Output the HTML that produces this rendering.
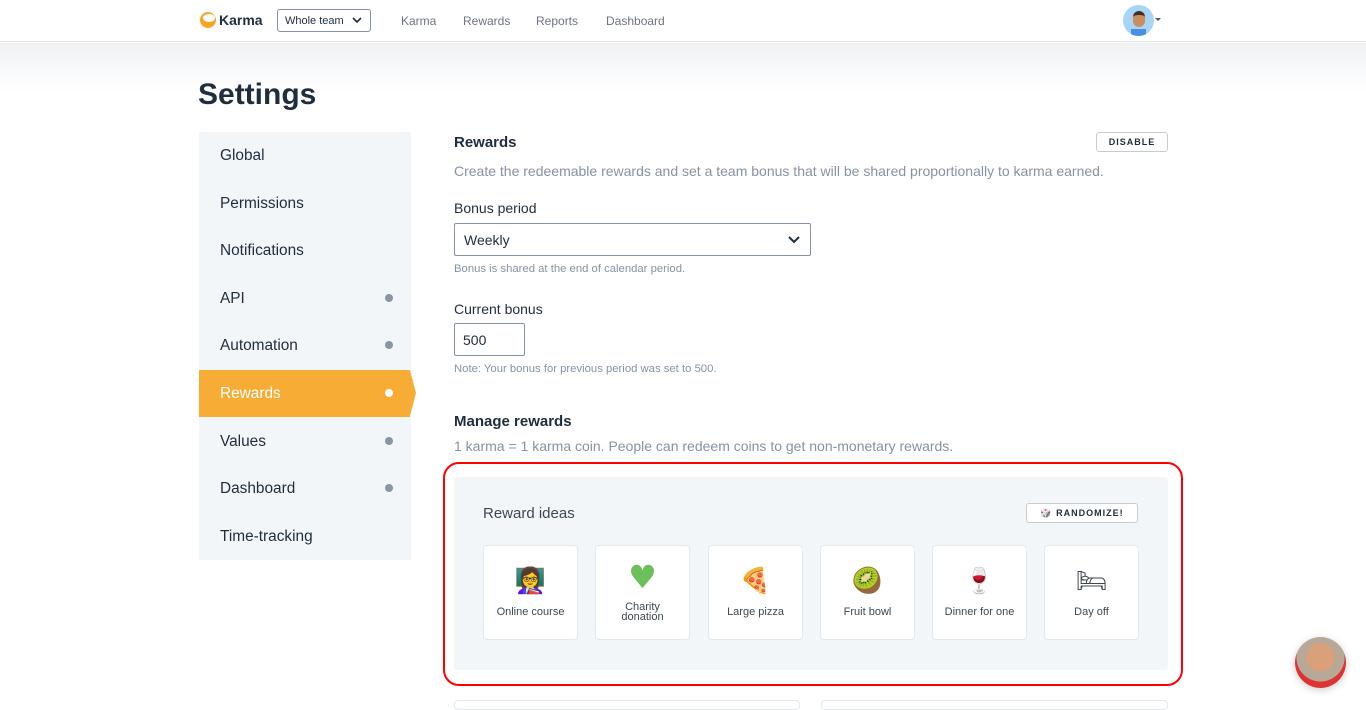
<!DOCTYPE html>
<html><head><meta charset="utf-8"><style>
*{box-sizing:border-box;margin:0;padding:0}
body{width:1366px;height:705px;overflow:hidden;background:#fff;font-family:"Liberation Sans",sans-serif;color:#1f2d3d;position:relative}
.top{position:absolute;left:0;top:0;width:1366px;height:42px;border-bottom:1px solid #e3e6ea;background:#fff}
.shade{position:absolute;left:0;top:43px;width:1366px;height:50px;background:linear-gradient(#f0f2f4,#fff)}
.abs{position:absolute}
.nav{font-size:12px;color:#6b7480;top:14px}
.side{position:absolute;left:199px;top:132px;width:212px;height:428px;background:#f3f6f9}
.si{position:absolute;left:21px;font-size:15.4px;color:#1f2d3d}
.dot{position:absolute;left:186px;width:8px;height:8px;border-radius:50%;background:#8a96a3}
.muted{color:#8593a3}
.card{position:absolute;top:545px;width:95px;height:95px;background:#fff;border:1px solid #e3e8ee;border-radius:4px;text-align:center;font-size:11px;color:#3d4852}
.card .e{position:absolute;top:20px;left:0;right:0;font-size:25px;font-family:"DejaVu Sans",sans-serif}
.card .t{position:absolute;top:61px;left:0;right:0;line-height:10px}
</style></head><body>
<div class="top"></div>
<div class="shade"></div>
<div class="abs" style="left:200px;top:12px;width:16px;height:16px;border-radius:50%;background:#f5a623;overflow:hidden"><div style="position:absolute;left:3px;top:2px;width:12px;height:8px;border-radius:50%;background:#fff"></div></div>
<div class="abs" style="left:219px;top:12px;font-size:14px;font-weight:bold;color:#1f2d3d">Karma</div>
<div class="abs" style="left:277px;top:9px;width:94px;height:23px;border:1px solid #8593a3;border-radius:3px;font-size:11px;padding:5px 7px;color:#1f2d3d">Whole team <svg style="position:absolute;right:8px;top:7px" width="10" height="7" viewBox="0 0 10 7"><path d="M1 1l4 4 4-4" fill="none" stroke="#1f2d3d" stroke-width="1.6"/></svg></div>
<div class="abs nav" style="left:401px">Karma</div>
<div class="abs nav" style="left:463px">Rewards</div>
<div class="abs nav" style="left:536px">Reports</div>
<div class="abs nav" style="left:606px">Dashboard</div>
<div class="abs" style="left:1123px;top:5px;width:31px;height:31px;border-radius:50%;background:#a8d4f5;overflow:hidden"><div style="position:absolute;left:10px;top:6px;width:12px;height:16px;border-radius:6px;background:#c98d5f;border-top:4px solid #4a2c1a"></div><div style="position:absolute;left:8px;top:24px;width:15px;height:10px;background:#4a90e2"></div></div>
<div class="abs" style="left:1155px;top:18px;border:3px solid transparent;border-top:3px solid #555"></div>
<div class="abs" style="left:198px;top:78px;font-size:30px;font-weight:bold;color:#1f2d3d">Settings</div>
<div class="side"></div>
<div class="abs" style="left:199px;top:370px;width:211px;height:47px;background:#f7ad35"></div>
<div class="abs" style="left:410px;top:370px;border-left:6px solid #f7ad35;border-top:23.5px solid transparent;border-bottom:23.5px solid transparent"></div>
<div class="si" style="left:220px;top:147px">Global</div>
<div class="si" style="left:220px;top:195px">Permissions</div>
<div class="si" style="left:220px;top:242px">Notifications</div>
<div class="si" style="left:220px;top:290px">API</div><div class="dot" style="left:385px;top:294px"></div>
<div class="si" style="left:220px;top:337px">Automation</div><div class="dot" style="left:385px;top:341px"></div>
<div class="si" style="left:220px;top:385px;color:#fff">Rewards</div><div class="dot" style="left:385px;top:389px;background:#fff"></div>
<div class="si" style="left:220px;top:433px">Values</div><div class="dot" style="left:385px;top:437px"></div>
<div class="si" style="left:220px;top:480px">Dashboard</div><div class="dot" style="left:385px;top:484px"></div>
<div class="si" style="left:220px;top:528px">Time-tracking</div>
<div class="abs" style="left:454px;top:134px;font-size:15px;font-weight:bold">Rewards</div>
<div class="abs" style="left:1096px;top:132px;width:72px;height:20px;border:1px solid #c5ccd4;border-radius:3px;font-size:9px;font-weight:bold;letter-spacing:1px;text-align:center;line-height:18px">DISABLE</div>
<div class="abs muted" style="left:454px;top:163px;font-size:14px">Create the redeemable rewards and set a team bonus that will be shared proportionally to karma earned.</div>
<div class="abs" style="left:454px;top:200px;font-size:14px">Bonus period</div>
<div class="abs" style="left:454px;top:223px;width:357px;height:33px;border:1px solid #8593a3;border-radius:2px;font-size:14px;padding:8px 9px">Weekly<svg style="position:absolute;right:10px;top:12px" width="12" height="8" viewBox="0 0 12 8"><path d="M1 1l5 5 5-5" fill="none" stroke="#1f2d3d" stroke-width="2"/></svg></div>
<div class="abs muted" style="left:454px;top:263px;font-size:11.3px">Bonus is shared at the end of calendar period.</div>
<div class="abs" style="left:454px;top:301px;font-size:14px">Current bonus</div>
<div class="abs" style="left:454px;top:323px;width:71px;height:33px;border:1px solid #8593a3;border-radius:2px;font-size:14px;padding:8px 8px">500</div>
<div class="abs muted" style="left:454px;top:363px;font-size:11.3px">Note: Your bonus for previous period was set to 500.</div>
<div class="abs" style="left:454px;top:413px;font-size:15px;font-weight:bold">Manage rewards</div>
<div class="abs muted" style="left:454px;top:438px;font-size:14px">1 karma = 1 karma coin. People can redeem coins to get non-monetary rewards.</div>
<div class="abs" style="left:443px;top:462px;width:740px;height:224px;border:2.5px solid #f00;border-radius:16px"></div>
<div class="abs" style="left:454px;top:477px;width:714px;height:193px;background:#f3f6f9;border-radius:3px"></div>
<div class="abs" style="left:483px;top:505px;font-size:15px;color:#3d4852">Reward ideas</div>
<div class="abs" style="left:1026px;top:503px;width:112px;height:20px;border:1px solid #c5ccd4;border-radius:3px;background:#fff;font-size:9px;font-weight:bold;letter-spacing:1px;text-align:center;line-height:18px">🎲 RANDOMIZE!</div>
<div class="card" style="left:483px"><div class="e">👩‍🏫</div><div class="t">Online course</div></div>
<div class="card" style="left:595px"><div class="e" style="color:#6cbf5a;font-size:32px;top:12px">♥</div><div class="t" style="top:56px">Charity<br>donation</div></div>
<div class="card" style="left:708px"><div class="e">🍕</div><div class="t">Large pizza</div></div>
<div class="card" style="left:820px"><div class="e">🥝</div><div class="t">Fruit bowl</div></div>
<div class="card" style="left:932px"><div class="e">🍷</div><div class="t">Dinner for one</div></div>
<div class="card" style="left:1044px"><div class="e">🛏</div><div class="t">Day off</div></div>
<div class="abs" style="left:454px;top:700px;width:346px;height:10px;border:1px solid #e3e8ee;border-radius:4px"></div>
<div class="abs" style="left:821px;top:700px;width:347px;height:10px;border:1px solid #e3e8ee;border-radius:4px"></div>
<div class="abs" style="left:1295px;top:637px;width:51px;height:51px;border-radius:50%;background:radial-gradient(circle at 50% 40%,#d9a07a 0 35%,#b8a898 36% 60%,#d33 61%);box-shadow:0 2px 8px rgba(0,0,0,.2)"></div>
</body></html>
